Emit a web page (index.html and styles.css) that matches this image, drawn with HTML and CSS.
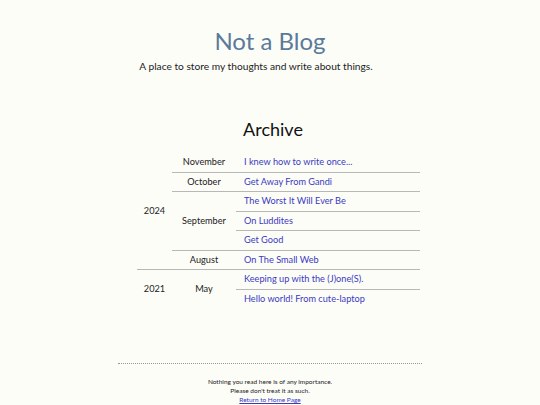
FILE: index.html
```html
<!DOCTYPE html>
<html>
<head>
<meta charset="utf-8">
<link rel="stylesheet" href="styles.css">
</head>
<body>
<header class="site-header">
  <h1 class="site-title">Not a Blog</h1>
  <p class="tagline">A place to store my thoughts and write about things.</p>
</header>
<main class="content">
  <h2 class="archive-title">Archive</h2>
  <table class="archive">
    <tbody>
      <tr>
        <td class="year" rowspan="6">2024</td>
        <td class="month">November</td>
        <td class="post"><a href="#">I knew how to write once...</a></td>
      </tr>
      <tr class="sep-month">
        <td class="month">October</td>
        <td class="post"><a href="#">Get Away From Gandi</a></td>
      </tr>
      <tr class="sep-month">
        <td class="month" rowspan="3">September</td>
        <td class="post"><a href="#">The Worst It Will Ever Be</a></td>
      </tr>
      <tr class="sep-post">
        <td class="post"><a href="#">On Luddites</a></td>
      </tr>
      <tr class="sep-post">
        <td class="post"><a href="#">Get Good</a></td>
      </tr>
      <tr class="sep-month">
        <td class="month">August</td>
        <td class="post"><a href="#">On The Small Web</a></td>
      </tr>
      <tr class="sep-year">
        <td class="year" rowspan="2">2021</td>
        <td class="month" rowspan="2">May</td>
        <td class="post"><a href="#">Keeping up with the (J)one(S).</a></td>
      </tr>
      <tr class="sep-post">
        <td class="post"><a href="#">Hello world! From cute-laptop</a></td>
      </tr>
    </tbody>
  </table>
</main>
<footer class="site-footer">
  <p>Nothing you read here is of any importance.</p>
  <p>Please don't treat it as such.</p>
  <p><a href="#" class="home-link">Return to Home Page</a></p>
</footer>
</body>
</html>
```
FILE: styles.css
```css
html, body {
  margin: 0;
  padding: 0;
  background: #fdfdf8;
}
body {
  font-family: Lato, "Noto Sans", sans-serif;
  color: #222;
  width: 540px;
  height: 405px;
  overflow: hidden;
}
.site-header {
  text-align: center;
  padding-top: 24px;
}
.site-title {
  margin: 0;
  font-size: 24px;
  font-weight: 400;
  line-height: 34px;
  color: #5a7a9b;
}
.tagline {
  margin: 0;
  padding-right: 28px;
  font-size: 10.2px;
  line-height: 16px;
  color: #222;
}
.content {
  width: 304px;
  margin: 0 auto;
  padding-top: 42px;
}
.archive-title {
  margin: 0 0 11px 0;
  text-align: center;
  font-size: 18px;
  font-weight: 400;
  line-height: 26px;
  color: #111;
  padding-left: 6px;
}
.archive {
  width: 283px;
  margin-left: 19px;
  border-collapse: collapse;
  font-size: 9.2px;
}
.archive td {
  padding: 0;
  height: 18.5px;
  line-height: 18px;
  vertical-align: middle;
}
.year {
  width: 35px;
  text-align: center;
  color: #222;
}
.month {
  width: 64px;
  text-align: center;
  color: #222;
}
.post {
  padding-left: 8px !important;
  text-align: left;
}
.post a {
  color: #3a3ac2;
  text-decoration: none;
}
.sep-post td.post {
  border-top: 1px solid #b8b8b8;
}
.sep-month td {
  border-top: 1px solid #b8b8b8;
}
.sep-year td {
  border-top: 1px solid #b8b8b8;
}
.site-footer {
  width: 304px;
  margin: 55px auto 0;
  border-top: 1px dotted #999;
  padding-top: 13px;
  text-align: center;
  font-size: 6.5px;
  line-height: 9px;
  color: #222;
}
.site-footer p {
  margin: 0;
}
.home-link {
  color: #3a3ac2;
  text-decoration: underline;
}
```
